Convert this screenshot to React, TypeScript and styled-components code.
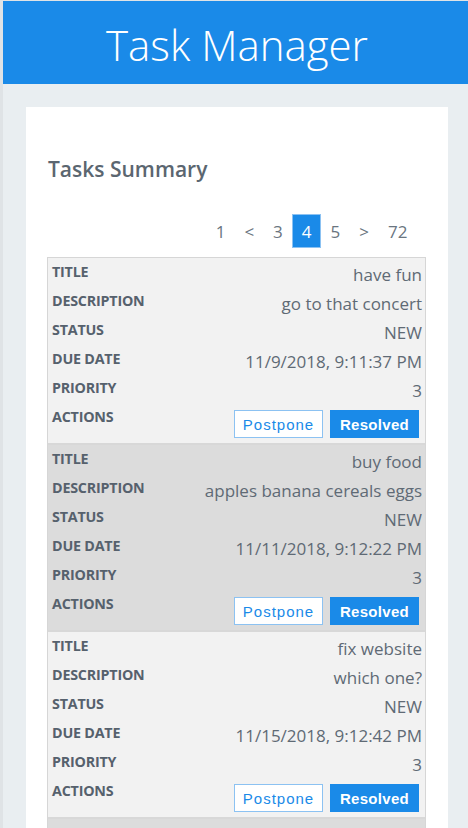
import React from 'react';
import styled, { createGlobalStyle } from 'styled-components';

interface Task {
  title: string;
  description: string;
  status: string;
  dueDate: string;
  priority: number;
}

const tasks: Task[] = [
  { title: 'have fun', description: 'go to that concert', status: 'NEW', dueDate: '11/9/2018, 9:11:37 PM', priority: 3 },
  { title: 'buy food', description: 'apples banana cereals eggs', status: 'NEW', dueDate: '11/11/2018, 9:12:22 PM', priority: 3 },
  { title: 'fix website', description: 'which one?', status: 'NEW', dueDate: '11/15/2018, 9:12:42 PM', priority: 3 },
  { title: 'read a book', description: 'something new', status: 'NEW', dueDate: '11/17/2018, 9:13:05 PM', priority: 2 },
];

const pages = ['1', '<', '3', '4', '5', '>', '72'];

const GlobalStyle = createGlobalStyle`
  body {
    margin: 0;
    background: #e9eef1;
    font-family: "Open Sans", "Noto Sans", sans-serif;
  }
`;

const Frame = styled.div`
  min-height: 100vh;
  border-left: 3px solid #dfe3e6;
  border-top: 1px solid #dfe3e6;
  box-sizing: border-box;
`;

const Header = styled.header`
  background: #1a8ae8;
  height: 83px;
  display: flex;
  align-items: center;
  justify-content: center;
`;

const AppTitle = styled.h1`
  margin: 0;
  color: #ffffff;
  font-weight: 300;
  font-size: 42px;
  line-height: 1;
  padding: 4px 0 0 3px;
`;

const Main = styled.main`
  padding: 23px 20px 0 23px;
`;

const Card = styled.section`
  background: #ffffff;
  padding: 47px 22px 40px 21px;
`;

const Heading = styled.h2`
  margin: 0 0 30px 1px;
  color: #5b6670;
  font-size: 21px;
  font-weight: 600;
  line-height: 30px;
`;

const Pagination = styled.nav`
  display: flex;
  justify-content: flex-end;
  padding-right: 9px;
  margin-bottom: 9px;
`;

const PageItem = styled.span<{ $active?: boolean }>`
  display: flex;
  align-items: center;
  justify-content: center;
  height: 34px;
  padding: 0 8.5px;
  font-size: 17px;
  color: ${(p) => (p.$active ? '#ffffff' : '#6a7580')};
  background: ${(p) => (p.$active ? '#1a8ae8' : 'transparent')};
  box-sizing: border-box;
  border: 1px solid ${(p) => (p.$active ? '#8cc2f2' : 'transparent')};
`;

const Table = styled.div`
  border: 1px solid #d6d6d6;
  border-bottom: none;
`;

const TaskBlock = styled.div<{ $striped: boolean }>`
  background: ${(p) => (p.$striped ? '#dcdcdc' : '#f2f2f2')};
  border-bottom: 2px solid #d8d8d8;
  padding: 4px 3px 3px 4px;
`;

const Row = styled.div`
  display: flex;
  justify-content: space-between;
  align-items: flex-start;
  height: 29px;
`;

const ActionRow = styled(Row)`
  height: 33px;
  align-items: flex-end;
`;

const Label = styled.span`
  font-size: 14.3px;
  font-weight: 700;
  color: #56616d;
  line-height: 20px;
  letter-spacing: -0.2px;
`;

const ActionLabel = styled(Label)`
  align-self: flex-start;
`;

const Value = styled.span`
  font-size: 17px;
  color: #5f6a75;
  line-height: 26px;
`;

const Buttons = styled.div`
  display: flex;
  gap: 7px;
  padding-right: 3px;
  padding-bottom: 2px;
`;

const Button = styled.button<{ $primary?: boolean }>`
  width: 89px;
  height: 28px;
  box-sizing: border-box;
  font-family: "Liberation Sans", Arial, sans-serif;
  font-size: 15px;
  cursor: pointer;
  padding: 0;
  font-weight: ${(p) => (p.$primary ? 700 : 400)};
  letter-spacing: ${(p) => (p.$primary ? '0.3px' : '1px')};
  color: ${(p) => (p.$primary ? '#ffffff' : '#1a8ae8')};
  background: ${(p) => (p.$primary ? '#1a8ae8' : '#ffffff')};
  border: 1px solid ${(p) => (p.$primary ? '#1a8ae8' : '#8cc2f2')};
`;

const TaskItem: React.FC<{ task: Task; striped: boolean }> = ({ task, striped }) => (
  <TaskBlock $striped={striped}>
    <Row>
      <Label>TITLE</Label>
      <Value>{task.title}</Value>
    </Row>
    <Row>
      <Label>DESCRIPTION</Label>
      <Value>{task.description}</Value>
    </Row>
    <Row>
      <Label>STATUS</Label>
      <Value>{task.status}</Value>
    </Row>
    <Row>
      <Label>DUE DATE</Label>
      <Value>{task.dueDate}</Value>
    </Row>
    <Row>
      <Label>PRIORITY</Label>
      <Value>{task.priority}</Value>
    </Row>
    <ActionRow>
      <ActionLabel>ACTIONS</ActionLabel>
      <Buttons>
        <Button>Postpone</Button>
        <Button $primary>Resolved</Button>
      </Buttons>
    </ActionRow>
  </TaskBlock>
);

const App: React.FC = () => {
  return (
    <>
      <GlobalStyle />
      <Frame>
        <Header>
          <AppTitle>Task Manager</AppTitle>
        </Header>
        <Main>
          <Card>
            <Heading>Tasks Summary</Heading>
            <Pagination>
              {pages.map((p, i) => (
                <PageItem key={i} $active={p === '4'}>
                  {p}
                </PageItem>
              ))}
            </Pagination>
            <Table>
              {tasks.map((t, i) => (
                <TaskItem key={i} task={t} striped={i % 2 === 1} />
              ))}
            </Table>
          </Card>
        </Main>
      </Frame>
    </>
  );
};

export default App;
